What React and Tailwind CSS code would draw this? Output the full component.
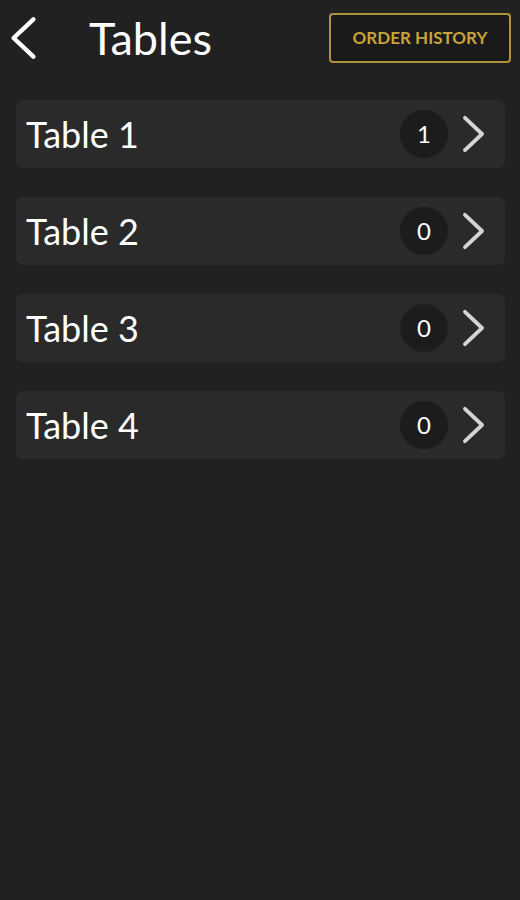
import React from 'react';

const tables = [
  { name: 'Table 1', count: 1 },
  { name: 'Table 2', count: 0 },
  { name: 'Table 3', count: 0 },
  { name: 'Table 4', count: 0 },
];

const Chevron = ({ dir = 'right', className }) => (
  <svg viewBox="0 0 24 40" className={className} fill="none" stroke="currentColor" strokeWidth="4" strokeLinecap="round" strokeLinejoin="round">
    {dir === 'right' ? <path d="M3 3 L21 20 L3 37" /> : <path d="M21 3 L3 20 L21 37" />}
  </svg>
);

const App = () => {
  return (
    <div className="min-h-[900px] w-full bg-[#212121] font-['Lato','Liberation_Sans',sans-serif] text-white">
      <div className="flex items-center justify-between px-[9px] pt-[13px]">
        <div className="flex items-center">
          <Chevron dir="left" className="w-[29px] h-[44px] text-white" />
          <h1 className="ml-[51px] text-[45px] leading-none">Tables</h1>
        </div>
        <button className="h-[50px] w-[182px] rounded-[4px] border-2 border-[#b0923a] bg-[#1a1a1a] text-[17px] font-bold text-[#c9a33a]">
          ORDER HISTORY
        </button>
      </div>

      <div className="mt-[37px] flex flex-col gap-[29px] pl-[16px] pr-[15px]">
        {tables.map((table) => (
          <div key={table.name} className="flex h-[68px] items-center justify-between rounded-[7px] bg-[#2a2a2a] pl-[10px] pr-[20px]">
            <span className="text-[36px] leading-none">{table.name}</span>
            <div className="flex items-center gap-[14px]">
              <div className="flex h-[48px] w-[48px] items-center justify-center rounded-full bg-[#1c1c1c] text-[24px]">
                {table.count}
              </div>
              <Chevron className="w-[23px] h-[38px] text-[#d4d4d4]" />
            </div>
          </div>
        ))}
      </div>
    </div>
  );
};

export default App;
